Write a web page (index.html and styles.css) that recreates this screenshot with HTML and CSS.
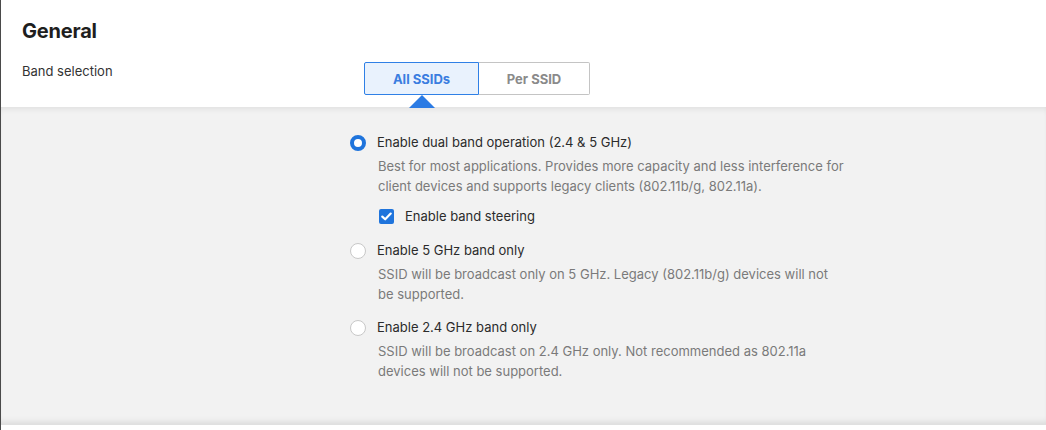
FILE: index.html
```html
<!DOCTYPE html>
<html>
<head>
<meta charset="utf-8">
<link rel="stylesheet" href="styles.css">
</head>
<body>
<div class="page">
  <div class="header">
    <h1 class="title">General</h1>
    <div class="band-row">
      <div class="band-label">Band selection</div>
      <div class="segmented">
        <div class="seg seg-active">All SSIDs</div>
        <div class="seg seg-inactive">Per SSID</div>
      </div>
    </div>
  </div>
  <div class="panel">
    <div class="options">
      <div class="option">
        <div class="radio-col"><span class="radio radio-on"></span></div>
        <div class="option-body">
          <div class="option-label">Enable dual band operation (2.4 &amp; 5 GHz)</div>
          <div class="option-desc">Best for most applications. Provides more capacity and less interference for client devices and supports legacy clients (802.11b/g, 802.11a).</div>
          <div class="check-row">
            <span class="checkbox"><svg width="11" height="9" viewBox="0 0 11 9"><path d="M1.3 4.6 L4.2 7.3 L9.7 1.6" fill="none" stroke="#fff" stroke-width="2.2" stroke-linecap="round" stroke-linejoin="round"/></svg></span>
            <span class="check-label">Enable band steering</span>
          </div>
        </div>
      </div>
      <div class="option">
        <div class="radio-col"><span class="radio"></span></div>
        <div class="option-body">
          <div class="option-label">Enable 5 GHz band only</div>
          <div class="option-desc">SSID will be broadcast only on 5 GHz. Legacy (802.11b/g) devices will not be supported.</div>
        </div>
      </div>
      <div class="option">
        <div class="radio-col"><span class="radio"></span></div>
        <div class="option-body">
          <div class="option-label">Enable 2.4 GHz band only</div>
          <div class="option-desc">SSID will be broadcast on 2.4 GHz only. Not recommended as 802.11a devices will not be supported.</div>
        </div>
      </div>
    </div>
  </div>
</div>
</body>
</html>
```

FILE: styles.css
```css
html, body {
  margin: 0;
  padding: 0;
  background: #fff;
}
body {
  font-family: Inter, "Noto Sans", "Liberation Sans", sans-serif;
  color: #333;
  width: 1046px;
  height: 430px;
  overflow: hidden;
}
.page {
  border-left: 1px solid #4a4a4a;
  height: 430px;
  box-sizing: border-box;
}
.header {
  padding: 18px 0 0 21px;
  height: 89px;
}
.title {
  margin: 0;
  font-size: 20px;
  line-height: 26px;
  font-weight: 700;
  color: #1e1e1e;
  letter-spacing: -0.2px;
}
.band-row {
  display: flex;
  align-items: flex-start;
  margin-top: 18px;
}
.band-label {
  width: 342px;
  font-size: 13px;
  line-height: 19px;
  color: #333;
}
.segmented {
  display: flex;
}
.seg {
  height: 33px;
  box-sizing: border-box;
  display: flex;
  align-items: center;
  justify-content: center;
  font-size: 13px;
  font-weight: 700;
  position: relative;
}
.seg-active {
  width: 115px;
  background: #e9f2fd;
  border: 1px solid #2f80e6;
  color: #3a7de0;
  border-radius: 2px 0 0 2px;
}
.seg-active::after {
  content: "";
  position: absolute;
  left: 50%;
  margin-left: -13px;
  top: 32px;
  border-left: 13px solid transparent;
  border-right: 13px solid transparent;
  border-bottom: 13px solid #2b7be4;
}
.seg-inactive {
  width: 111px;
  background: #fff;
  border: 1px solid #c4c4c4;
  border-left: none;
  color: #8a8a8a;
  border-radius: 0 2px 2px 0;
}
.panel {
  background: #f2f2f2;
  height: 318px;
  box-shadow: inset 0 6px 6px -4px rgba(0,0,0,0.08), inset 0 -6px 6px -4px rgba(0,0,0,0.10);
  border-bottom: 1px solid #e0e0e0;
  box-sizing: border-box;
  padding-top: 26px;
}
.options {
  margin-left: 349px;
  width: 500px;
}
.option {
  display: flex;
  margin-bottom: 14px;
}
.option:first-child {
  margin-bottom: 15px;
}
.radio-col {
  width: 27px;
  flex: none;
  padding-top: 2px;
}
.radio {
  display: block;
  width: 16px;
  height: 16px;
  box-sizing: border-box;
  border-radius: 50%;
  border: 1px solid #c8c8c8;
  background: #fff;
}
.radio-on {
  border: 4px solid #1f74dc;
}
.option-body {
  flex: 1;
}
.option-label {
  font-size: 13px;
  line-height: 19px;
  color: #2b2b2b;
}
.option-desc {
  font-size: 13px;
  line-height: 19.5px;
  color: #7a7a7a;
  margin-top: 5px;
  max-width: 466px;
  padding-left: 1px;
}
.check-row {
  display: flex;
  align-items: center;
  margin-top: 10px;
  padding-left: 2px;
  height: 20px;
}
.checkbox {
  width: 15px;
  height: 15px;
  border-radius: 2px;
  background: #1f74dc;
  display: flex;
  align-items: center;
  justify-content: center;
  margin-right: 11px;
}
.check-label {
  font-size: 13px;
  color: #2b2b2b;
}
```
